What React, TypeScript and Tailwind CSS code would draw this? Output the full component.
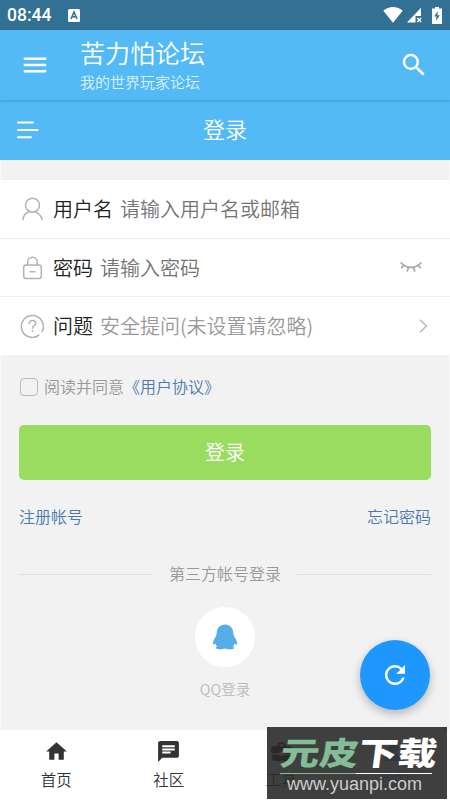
import React from "react";
import { MdChat, MdHome, MdMenu, MdRefresh, MdSearch } from "react-icons/md";

const fields = [
  { id: "user", label: "用户名", hint: "请输入用户名或邮箱", tone: "text-[#757575]" },
  { id: "password", label: "密码", hint: "请输入密码", tone: "text-[#757575]" },
  { id: "question", label: "问题", hint: "安全提问(未设置请忽略)", tone: "text-[#999]" },
];

function FieldIcon({ id }: { id: string }) {
  return (
    <svg width="24" height="24" viewBox="0 0 24 24" fill="none" stroke="#b2b2b2" strokeWidth="1.5" strokeLinecap="round">
      {id === "user" && (
        <>
          <circle cx="12.5" cy="8.2" r="7" />
          <path d="M9 14.8C5.8 16.2 3.4 18.9 2.9 22.4M16.2 15.4c2.9 1.4 5.2 3.8 5.9 7" />
        </>
      )}
      {id === "password" && (
        <>
          <rect x="3.7" y="9" width="17.6" height="13.6" rx="2.6" />
          <path d="M7.7 9V6a4.8 4.8 0 0 1 9.6 0v3M10.2 15.7h4.6" />
        </>
      )}
      {id === "question" && (
        <>
          <path d="M18.900 21.200A11 11 0 1 1 22 17.600" />
          <path d="M9.200 9.500c0-1.900 1.400-3.100 3.300-3.100s3.300 1.100 3.300 2.800c0 2.300-3.300 2.300-3.300 5" />
          <path d="M12.500 16.800v.3" strokeWidth="1.7" />
        </>
      )}
    </svg>
  );
}

function StatusBar() {
  return (
    <div className="flex h-[30px] items-center bg-[#327094] pr-2 pl-[7px] text-white">
      <span className="w-[61px] pt-[2px] font-[Roboto] text-[17.5px] leading-none font-medium">08:44</span>
      <svg width="12" height="13" viewBox="0 0 12 13">
        <rect width="12" height="13" rx="1.5" fill="#fff" />
        <path d="M3 10 6 3l3 7M4 7.7h4" fill="none" stroke="#327094" strokeWidth="1.5" />
      </svg>
      <div className="ml-auto flex items-center gap-1">
        <svg width="20" height="16" viewBox="0 0 20 16" fill="#fff">
          <path d="M.3 3.7C6-1.1 14-1.1 19.7 3.7L10 15.7z" />
        </svg>
        <svg width="16" height="16" viewBox="0 0 16 16" fill="#fff">
          <path d="M14 .8V9H8.5v6.6H0z" />
          <path d="m10.2 11 4 4m0-4-4 4" stroke="#fff" strokeWidth="1.4" />
        </svg>
        <svg width="10" height="17" viewBox="0 0 10 17" className="ml-[5px]">
          <path d="M3 0h4v1.6h3V17H0V1.6h3z" fill="#fff" />
          <path d="M5.8 4 2.2 9.5h2.3L4 14l3.8-5.7H5.4z" fill="#327094" />
        </svg>
      </div>
    </div>
  );
}

function Divider() {
  return <span className="h-px flex-1 bg-[#ddd]" />;
}

export default function App(): React.JSX.Element {
  return (
    <div className="relative flex h-[800px] w-[450px] flex-col overflow-hidden bg-[#f2f2f2] font-['Noto_Sans_CJK_SC',sans-serif] font-[350]">
      <StatusBar />

      <header className="z-10 flex h-[70px] items-center bg-[#54baf5] pr-[21px] pl-5 text-white shadow-[0_1px_3px_rgba(0,0,0,0.2)]">
        <MdMenu size={30} />
        <div className="ml-[30px] flex-1 pt-[3px]">
          <h1 className="text-[25px] leading-[31px] font-[350]">苦力怕论坛</h1>
          <p className="text-[15px] leading-[28px] text-[#dcf1fd]">我的世界玩家论坛</p>
        </div>
        <MdSearch size={30} />
      </header>

      <div className="flex h-[60px] items-center bg-[#54baf5] px-[17px] text-white">
        <svg width="22" height="18" viewBox="0 0 22 18" stroke="#fff" strokeWidth="2" strokeLinecap="round">
          <path d="M1 1.5h15M1 9h19.5M1 16.3h13" />
        </svg>
        <h2 className="flex-1 pr-[22px] pb-[5px] text-center text-[22px] leading-none">登录</h2>
      </div>

      <main className="flex flex-1 flex-col pt-5 shadow-[inset_1px_0_0_#fafafa,inset_-1px_0_0_#f9f9f9]">
        <div className="flex flex-col gap-px bg-[#eee]">
          {fields.map(({ id, label, hint, tone }) => (
            <div key={id} className="flex h-[57.7px] items-center bg-white pr-5 pl-5 text-[20px]">
              <FieldIcon id={id} />
              <span className="ml-[9px] text-[#222]">{label}</span>
              <span className={`ml-[7px] flex-1 ${tone}`}>{hint}</span>
              {id === "password" && (
                <svg width="22" height="12" viewBox="0 0 22 12" fill="none" stroke="#aaa" strokeWidth="1.7" strokeLinecap="round" className="mr-2 mb-[2px]">
                  <path d="M1 1.8c5.5 6.2 14.5 6.2 20 0M4 4.2 1.7 6.6M8.5 6.3 7.3 10M13.5 6.3l1.2 3.7M18 4.2l2.3 2.4" />
                </svg>
              )}
              {id === "question" && (
                <svg width="9" height="14" viewBox="0 0 9 14" fill="none" stroke="#b5b5b5" strokeWidth="1.4" className="mr-[2px]">
                  <path d="m1 .8 6.500 6.200L1 13.200" />
                </svg>
              )}
            </div>
          ))}
        </div>

        <div className="flex h-[62px] items-center px-5 text-[16px] text-[#999]">
          <span className="mt-[2px] mr-[6px] size-[18px] rounded-[4px] border-[1.5px] border-[#bbb]" />
          阅读并同意<a className="text-[#4a7ab0]">《用户协议》</a>
        </div>

        <button className="mx-[19px] mt-[8px] h-[55px] rounded-[5px] bg-[#99dc60] pb-px text-[20px] text-white">登录</button>

        <div className="mx-[19px] mt-[24px] flex justify-between text-[16px] leading-[24px] text-[#4a7ab0]">
          <a>注册帐号</a>
          <a>忘记密码</a>
        </div>

        <div className="mx-[19px] mt-[34px] flex h-6 items-center gap-4 text-[16px] leading-[24px] text-[#999]">
          <Divider />
          <span className="pb-[3px]">第三方帐号登录</span>
          <Divider />
        </div>

        <div className="mt-[21px] flex flex-col items-center gap-[10px]">
          <span className="flex size-[60px] items-center justify-center rounded-full bg-white">
            <svg width="26" height="26" viewBox="0 0 26 26" fill="#56aee9">
              <path d="M13 .5C8 .5 4.800 4.200 4.600 9.200c0 2.200-.9 3.300-1.900 5.100-1.600 2.800-2.100 4.800-1.600 6 .3.800 1.300.4 2.300-.7.300 1.300.9 2.200 1.700 3-.9.400-1.200.9-1 1.600.4 1.500 6.500 1.500 8.900.4 2.400 1.100 8.500 1.100 8.900-.4.200-.7-.1-1.200-1-1.600.8-.8 1.400-1.700 1.700-3 1 1.100 2 1.500 2.300.7.500-1.200 0-3.200-1.600-6-1-1.800-1.900-2.900-1.900-5.100C21.200 4.200 18 .5 13 .5z" />
            </svg>
          </span>
          <span className="text-[14.5px] leading-[23px] text-[#bbb]">QQ登录</span>
        </div>
      </main>

      <nav className="grid h-[70px] grid-cols-4 bg-white text-[15.5px] text-[#333]">
        <div className="flex flex-col items-center pt-[9px]">
          <MdHome size={25} />
          <span className="mt-[3px] leading-6">首页</span>
        </div>
        <div className="flex flex-col items-center pt-[9px]">
          <MdChat size={25} />
          <span className="mt-[3px] leading-6">社区</span>
        </div>
        <div className="flex flex-col items-center pt-[9px]">
          <svg width="25" height="25" viewBox="0 0 24 24" fill="#222">
            <path d="M10 16v-1H3v4a2 2 0 0 0 2 2h14a2 2 0 0 0 2-2v-4h-7v1zm10-9h-4V5l-2-2h-4L8 5v2H4a2 2 0 0 0-2 2v3a2 2 0 0 0 2 2h6v-2h4v2h6a2 2 0 0 0 2-2V9a2 2 0 0 0-2-2zm-6 0h-4V5h4z" />
          </svg>
          <span className="mt-[3px] leading-6">工具</span>
        </div>
        <div className="flex flex-col items-center pt-[9px] text-[#54baf5]">
          <svg width="25" height="25" viewBox="0 0 24 24" fill="currentColor">
            <circle cx="12" cy="8" r="5" />
            <path d="M3 21c0-5 4-7 9-7s9 2 9 7z" />
          </svg>
          <span className="mt-[3px] leading-6">我的</span>
        </div>
      </nav>

      <button className="absolute top-[640px] left-[360px] flex size-[70px] items-center justify-center rounded-full bg-[#1e98ff] text-white shadow-[0_4px_10px_rgba(0,0,0,0.25)]">
        <MdRefresh size={30} />
      </button>

      <div className="absolute top-[727px] left-[267px] flex h-[72px] w-[180px] flex-col bg-[#2a2a2a]/90 pl-[13px]">
        <div className="mt-[7px] ml-px flex h-[37px] origin-center -skew-x-6 scale-y-[0.82] text-[39px] leading-[35px] font-black text-white">
          <span className="text-[#83bd96]">元皮</span>下载
        </div>
        <div className="mt-[2px] flex h-px w-[152px]">
          <span className="w-1/2 bg-[#83bd96]" />
          <span className="w-1/2 bg-white" />
        </div>
        <span className="ml-[7px] font-['Liberation_Sans',sans-serif] text-[18px] leading-[20px] text-[#ccc]">www.yuanpi.com</span>
      </div>
    </div>
  );
}
